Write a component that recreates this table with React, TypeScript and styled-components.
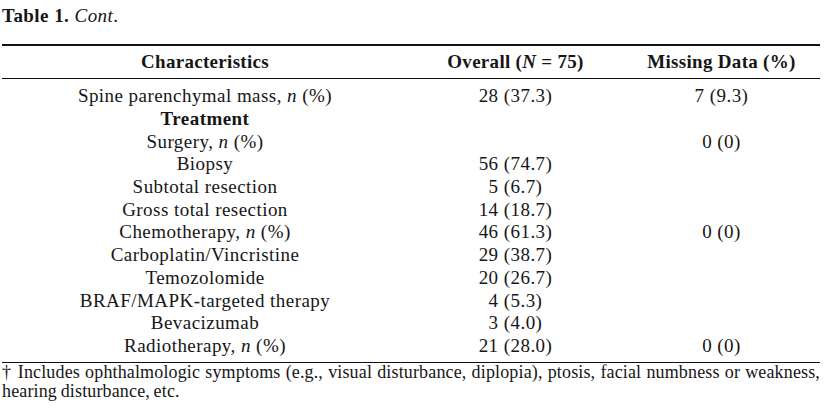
import React from 'react'
import styled, { createGlobalStyle } from 'styled-components'

const GlobalStyle = createGlobalStyle`
    html, body {
        margin: 0;
        padding: 0;
        background: #fff;
    }
    body {
        font-family: "Liberation Serif", "DejaVu Serif", serif;
        color: #161616;
    }
`;

const Page = styled.div`
    width: 825px;
    height: 420px;
    padding: 4px 5px 0 2px;
    box-sizing: border-box;
    font-size: 19px;
    letter-spacing: 0.45px;
`;

const Caption = styled.div`
    height: 24px;
    line-height: 24px;
    margin-bottom: 16px;
    b { font-weight: bold; }
    i { font-style: italic; }
`;

const Table = styled.table`
    width: 100%;
    border-collapse: collapse;
    border-top: 2px solid #111;
    border-bottom: 1px solid #111;
`;

const HeadCell = styled.th<{ w: number }>`
    width: ${props => props.w}px;
    font-weight: bold;
    text-align: center;
    height: 32px;
    padding: 0;
    letter-spacing: 0.3px;
    border-bottom: 1px solid #111;
`;

const Cell = styled.td<{ bold?: boolean }>`
    text-align: center;
    padding: 0;
    height: 22.7px;
    line-height: 20px;
    font-weight: ${props => (props.bold ? 'bold' : 'normal')};
`;

const FirstRow = styled.tr`
    td { padding-top: 6px; }
`;
const LastRow = styled.tr`
    td { padding-bottom: 5px; }
`;

const Footnote = styled.p`
    margin: 0;
    font-size: 18px;
    line-height: 19px;
    letter-spacing: 0.15px;
    word-spacing: -1px;
    text-align: justify;
    text-align-last: left;
`;

interface Row {
    label: React.ReactNode;
    overall?: string;
    missing?: string;
    bold?: boolean;
}

const pct = (t: string) => <>{t}, <i>n</i> (%)</>;

const rows: Row[] = [
    { label: pct('Spine parenchymal mass'), overall: '28 (37.3)', missing: '7 (9.3)' },
    { label: 'Treatment', bold: true },
    { label: pct('Surgery'), missing: '0 (0)' },
    { label: 'Biopsy', overall: '56 (74.7)' },
    { label: 'Subtotal resection', overall: '5 (6.7)' },
    { label: 'Gross total resection', overall: '14 (18.7)' },
    { label: pct('Chemotherapy'), overall: '46 (61.3)', missing: '0 (0)' },
    { label: 'Carboplatin/Vincristine', overall: '29 (38.7)' },
    { label: 'Temozolomide', overall: '20 (26.7)' },
    { label: 'BRAF/MAPK-targeted therapy', overall: '4 (5.3)' },
    { label: 'Bevacizumab', overall: '3 (4.0)' },
    { label: pct('Radiotherapy'), overall: '21 (28.0)', missing: '0 (0)' },
];

const App: React.FC = () => {
    return (
        <Page>
            <GlobalStyle />
            <Caption><b>Table 1.</b> <i>Cont</i>.</Caption>
            <Table>
                <thead>
                    <tr>
                        <HeadCell w={406}>Characteristics</HeadCell>
                        <HeadCell w={215}>Overall (<i>N</i> = 75)</HeadCell>
                        <HeadCell w={197}>Missing Data (%)</HeadCell>
                    </tr>
                </thead>
                <tbody>
                    {rows.map((r, i) => {
                        const cells = (
                            <>
                                <Cell bold={r.bold}>{r.label}</Cell>
                                <Cell>{r.overall}</Cell>
                                <Cell>{r.missing}</Cell>
                            </>
                        );
                        if (i === 0) return <FirstRow key={i}>{cells}</FirstRow>;
                        if (i === rows.length - 1) return <LastRow key={i}>{cells}</LastRow>;
                        return <tr key={i}>{cells}</tr>;
                    })}
                </tbody>
            </Table>
            <Footnote>
                † Includes ophthalmologic symptoms (e.g., visual disturbance, diplopia), ptosis, facial numbness or weakness, hearing disturbance, etc.
            </Footnote>
        </Page>
    )
}

export default App
